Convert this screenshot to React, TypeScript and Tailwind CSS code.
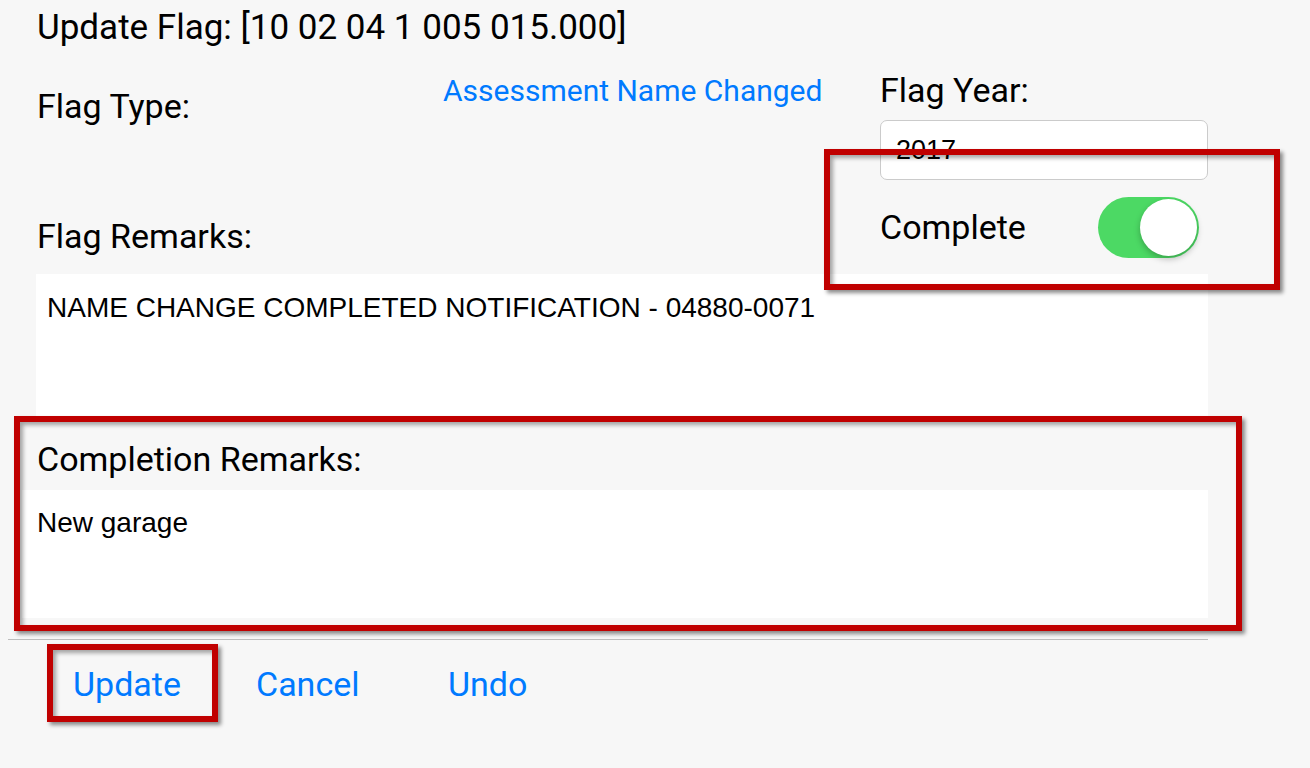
import React from 'react';

const box =
  'absolute border-[6px] border-[#c00000] shadow-[3px_3px_4px_rgba(0,0,0,0.45),inset_3px_3px_4px_rgba(0,0,0,0.35)]';

export default function App() {
  return (
    <div className="relative w-[1310px] h-[768px] overflow-hidden bg-[#f7f7f7] font-['Roboto',sans-serif] text-black">
      {/* Title */}
      <div className="pl-[37px] pt-[8px] text-[35px] leading-[40px]">Update Flag: [10 02 04 1 005 015.000]</div>

      {/* Flag type / year section */}
      <div className="flex">
        <div className="w-[880px] pl-[37px]">
          <div className="flex items-start">
            <div className="w-[406px] mt-[38px] text-[34px] leading-[40px]">Flag Type:</div>
            <div className="mt-[25px] text-[30px] leading-[36px] text-[#007aff]">Assessment Name Changed</div>
          </div>
          <div className="mt-[90px] text-[34px] leading-[40px]">Flag Remarks:</div>
        </div>
        <div className="w-[328px]">
          <div className="mt-[22px] text-[34px] leading-[40px]">Flag Year:</div>
          <div className="mt-[10px] h-[60px] rounded-[7px] border border-[#cbcbcb] bg-white pl-[15px] flex items-center font-['Liberation_Sans',sans-serif] text-[27px]">
            2017
          </div>
          <div className="mt-[16px] h-[62px] flex items-center justify-between pr-[9px]">
            <span className="text-[34px] leading-[40px]">Complete</span>
            <div className="w-[101px] h-[61px] rounded-full bg-[#4cd964] flex items-center justify-end pr-[2px]">
              <div className="w-[57px] h-[57px] rounded-full bg-white shadow-[0_3px_6px_rgba(0,0,0,0.25)]" />
            </div>
          </div>
        </div>
      </div>

      {/* Flag remarks box */}
      <div className="ml-[36px] mt-[16px] w-[1172px] h-[144px] bg-white pl-[11px] pt-[18px] font-['Liberation_Sans',sans-serif] text-[28px] leading-[32px]">
        NAME CHANGE COMPLETED NOTIFICATION - 04880-0071
      </div>

      {/* Completion remarks */}
      <div className="pl-[37px] mt-[21px] text-[34px] leading-[40px]">Completion Remarks:</div>
      <div className="ml-[22px] mt-[11px] w-[1186px] h-[128px] bg-white pl-[15px] pt-[17px] font-['Liberation_Sans',sans-serif] text-[28px] leading-[32px]">
        New garage
      </div>

      <div className="ml-[8px] mt-[21px] w-[1200px] border-t border-[#bdbdbd]" />

      {/* Actions */}
      <div className="flex pl-[73px] mt-[24px] text-[34px] leading-[40px] text-[#007aff]">
        <span className="w-[183px]">Update</span>
        <span className="w-[192px]">Cancel</span>
        <span>Undo</span>
      </div>

      {/* Annotation boxes */}
      <div className={`${box} left-[824px] top-[149px] w-[456px] h-[141px]`} />
      <div className={`${box} left-[14px] top-[416px] w-[1228px] h-[215px]`} />
      <div className={`${box} left-[47px] top-[644px] w-[171px] h-[78px]`} />
    </div>
  );
}
